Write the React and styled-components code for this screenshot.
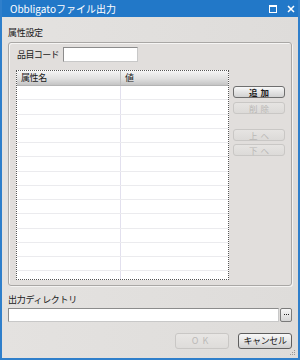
import React from "react";
import styled, { createGlobalStyle } from "styled-components";

const Global = createGlobalStyle`
  html, body { margin: 0; padding: 0; background: #e2e0de; }
  * { box-sizing: border-box; }
`;

const FONT = `"Noto Sans CJK JP", "Liberation Sans", sans-serif`;

const Window = styled.div`
  width: 300px;
  height: 360px;
  display: flex;
  flex-direction: column;
  background: linear-gradient(90deg, #e4e2e0 0%, #dedcda 100%);
  border: 2px solid #2f7fcb;
  border-top: none;
  font-family: ${FONT};
  color: #222;
  position: relative;
  overflow: hidden;
`;

const TitleBar = styled.div`
  height: 17px;
  margin: 0 -2px;
  background: #2278c8;
  display: flex;
  align-items: center;
  padding: 0 0 0 10px;
  color: #fff;
  font-size: 10px;
  flex-shrink: 0;
`;

const TitleText = styled.span`
  flex: 1;
  letter-spacing: 0px;
`;

const TitleIcons = styled.div`
  display: flex;
  align-items: center;
  gap: 10px;
  padding-right: 5px;
`;

const Body = styled.div`
  flex: 1;
  display: flex;
  flex-direction: column;
  padding: 10px 6px 0 6px;
`;

const Label = styled.div`
  font-size: 9px;
  line-height: 12px;
  height: 12px;
  letter-spacing: -0.3px;
  color: #1a1a1a;
  margin-top: ${(p) => p.$mt || "0"};
`;

const GroupBox = styled.div`
  margin-top: 3px;
  height: 244px;
  border: 1px solid #a9a7a5;
  border-radius: 3px;
  box-shadow: inset 1px 1px 0 #f6f5f4, 1px 1px 0 #f4f3f2;
  background: #e1dedc;
  padding: 4px 6px 5px 7px;
  display: flex;
  flex-direction: column;
`;

const FieldRow = styled.div`
  display: flex;
  align-items: center;
  height: 15px;
  padding-left: 1px;
`;

const FieldLabel = styled.span`
  width: 46px;
  font-size: 9px;
  letter-spacing: -0.6px;
`;

const TextInput = styled.div`
  width: ${(p) => p.$w || "auto"};
  flex: ${(p) => (p.$w ? "none" : "1")};
  height: ${(p) => p.$h || "15px"};
  background: #fff;
  border: 1px solid #8c8c8c;
  border-right-color: #c8c8c8;
  border-bottom-color: #c8c8c8;
`;

const TableArea = styled.div`
  margin-top: 8px;
  flex: 1;
  display: flex;
  gap: 4px;
  min-height: 0;
`;

const Table = styled.div`
  flex: 1;
  border: 1px dotted #555;
  background: #fff;
  overflow: hidden;
  display: flex;
  flex-direction: column;
`;

const HeaderRow = styled.div`
  display: flex;
  height: 15px;
  flex-shrink: 0;
  background: linear-gradient(#f4f4f4, #e0e0e0 55%, #c4c4c4);
  border-bottom: 1px solid #b4b4b4;
`;

const HeaderCell = styled.div`
  width: ${(p) => p.$w || "auto"};
  flex: ${(p) => (p.$w ? "none" : "1")};
  font-size: 9px;
  line-height: 14px;
  padding-left: 4px;
  border-right: ${(p) => (p.$w ? "1px solid #bcbcbc" : "none")};
  color: #1a1a1a;
  letter-spacing: -0.4px;
`;

const DataRow = styled.div`
  display: flex;
  height: 14.25px;
  flex-shrink: 0;
  border-bottom: 1px solid #ebebee;
`;

const DataCell = styled.div`
  width: ${(p) => p.$w || "auto"};
  flex: ${(p) => (p.$w ? "none" : "1")};
  border-right: ${(p) => (p.$w ? "1px solid #e2e0ee" : "none")};
`;

const ButtonColumn = styled.div`
  width: 52px;
  display: flex;
  flex-direction: column;
  padding-top: 16px;
`;

const SideButton = styled.div`
  height: 12px;
  margin-top: ${(p) => p.$gap || "0"};
  border-radius: 3px;
  border: 1px solid ${(p) => (p.$disabled ? "#c9c7c5" : "#6e6e6e")};
  background: ${(p) =>
    p.$disabled
      ? "linear-gradient(#e6e4e2, #dcdad8)"
      : "linear-gradient(#f8f8f8, #e4e4e4 50%, #d2d2d2)"};
  color: ${(p) => (p.$disabled ? "#b9b7b5" : "#1a1a1a")};
  font-size: 8.5px;
  line-height: 10px;
  text-align: center;
  letter-spacing: 3px;
  text-indent: 3px;
  font-weight: ${(p) => (p.$disabled ? "normal" : "bold")};
`;

const DirRow = styled.div`
  margin-top: 2px;
  display: flex;
  height: 14px;
`;

const BrowseButton = styled.div`
  width: 12px;
  height: 14px;
  margin-left: 1px;
  border: 1px solid #7a7a7a;
  border-radius: 2px;
  background: linear-gradient(#f6f6f6, #d6d6d6);
  display: flex;
  align-items: center;
  justify-content: center;
  gap: 1px;
  padding-bottom: 2px;
`;

const Dot = styled.span`
  width: 1px;
  height: 1px;
  background: #222;
`;

const Footer = styled.div`
  margin-top: 11px;
  display: flex;
  justify-content: flex-end;
  gap: 9px;
`;

const FooterButton = styled.div`
  width: 54px;
  height: 16px;
  border-radius: 3px;
  border: 1px solid ${(p) => (p.$disabled ? "#c9c7c5" : "#5e5e5e")};
  background: ${(p) =>
    p.$disabled
      ? "linear-gradient(#e8e6e4, #dedcda)"
      : "linear-gradient(#f8f8f8, #e6e6e6 50%, #d0d0d0)"};
  color: ${(p) => (p.$disabled ? "#bcbab8" : "#1a1a1a")};
  font-size: 9px;
  line-height: 14px;
  text-align: center;
  letter-spacing: ${(p) => (p.$disabled ? "4px" : "-0.4px")};
`;

const Grip = styled.svg`
  position: absolute;
  right: 2px;
  bottom: 2px;
`;

const cols = ["104px"];

export default function App() {
  const rows = Array.from({ length: 14 });
  return (
    <>
      <Global />
      <Window>
        <TitleBar>
          <TitleText>Obbligatoファイル出力</TitleText>
          <TitleIcons>
            <svg width="8" height="8" viewBox="0 0 8 8">
              <rect x="0.5" y="0.5" width="7" height="7" fill="none" stroke="#fff" />
              <rect x="0" y="0" width="8" height="2" fill="#fff" />
            </svg>
            <svg width="8" height="8" viewBox="0 0 8 8">
              <path d="M1 1 L7 7 M7 1 L1 7" stroke="#fff" strokeWidth="1.5" />
            </svg>
          </TitleIcons>
        </TitleBar>
        <Body>
          <Label>属性設定</Label>
          <GroupBox>
            <FieldRow>
              <FieldLabel>品目コード</FieldLabel>
              <TextInput $w="75px" />
            </FieldRow>
            <TableArea>
              <Table>
                <HeaderRow>
                  <HeaderCell $w={cols[0]}>属性名</HeaderCell>
                  <HeaderCell>値</HeaderCell>
                </HeaderRow>
                {rows.map((_, i) => (
                  <DataRow key={i}>
                    <DataCell $w={cols[0]} />
                    <DataCell />
                  </DataRow>
                ))}
              </Table>
              <ButtonColumn>
                <SideButton>追加</SideButton>
                <SideButton $disabled $gap="4px">削除</SideButton>
                <SideButton $disabled $gap="15px">上へ</SideButton>
                <SideButton $disabled $gap="3px">下へ</SideButton>
              </ButtonColumn>
            </TableArea>
          </GroupBox>
          <Label $mt="8px">出力ディレクトリ</Label>
          <DirRow>
            <TextInput $h="14px" />
            <BrowseButton>
              <Dot />
              <Dot />
              <Dot />
            </BrowseButton>
          </DirRow>
          <Footer>
            <FooterButton $disabled>OK</FooterButton>
            <FooterButton>キャンセル</FooterButton>
          </Footer>
        </Body>
        <Grip width="6" height="6" viewBox="0 0 6 6">
          <rect x="4" y="0" width="1" height="1" fill="#999" />
          <rect x="2" y="2" width="1" height="1" fill="#999" />
          <rect x="4" y="2" width="1" height="1" fill="#999" />
          <rect x="0" y="4" width="1" height="1" fill="#999" />
          <rect x="2" y="4" width="1" height="1" fill="#999" />
          <rect x="4" y="4" width="1" height="1" fill="#999" />
        </Grip>
      </Window>
    </>
  );
}
